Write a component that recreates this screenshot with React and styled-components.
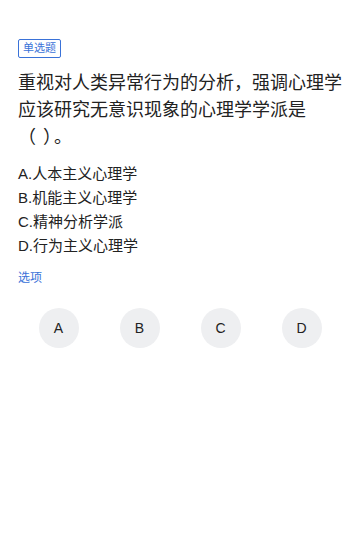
import React from 'react';
import styled, { createGlobalStyle } from 'styled-components';

const GlobalStyle = createGlobalStyle`
  html, body {
    margin: 0;
    padding: 0;
    background: #fff;
  }
  body {
    font-family: "Liberation Sans", "Noto Sans CJK SC", sans-serif;
    color: #222;
  }
`;

const Page = styled.div`
  display: flex;
  flex-direction: column;
  align-items: stretch;
  width: 360px;
  min-height: 550px;
  box-sizing: border-box;
  padding: 39px 18px 0;
  background: #fff;
`;

const Tag = styled.span`
  align-self: flex-start;
  box-sizing: border-box;
  height: 19px;
  padding: 0 4px;
  border: 1px solid #3a72d8;
  border-radius: 2px;
  color: #3a72d8;
  font-size: 11px;
  line-height: 17px;
`;

const Question = styled.div`
  margin-top: 12px;
  font-size: 18px;
  line-height: 27px;
  color: #222;
`;

const Paren = styled.span`
  letter-spacing: ${props => props.gap}px;
`;

const OptionList = styled.ul`
  list-style: none;
  margin: 11px 0 0;
  padding: 0;
`;

const OptionItem = styled.li`
  font-size: 15px;
  line-height: 24px;
  color: #222;
`;

const SectionLabel = styled.div`
  margin-top: 11px;
  font-size: 12px;
  line-height: 18px;
  color: #3a72d8;
`;

const ChoiceRow = styled.div`
  display: grid;
  grid-template-columns: repeat(4, 1fr);
  margin-top: 21px;
`;

const ChoiceButton = styled.button`
  justify-self: center;
  width: 40px;
  height: 40px;
  border: none;
  border-radius: 50%;
  background: ${props => (props.selected ? '#3a72d8' : '#eeeff1')};
  color: ${props => (props.selected ? '#fff' : '#222')};
  font-family: "Liberation Sans", Arial, sans-serif;
  font-size: 14px;
  padding: 0;
`;

const options = [
  { key: 'A', text: '人本主义心理学' },
  { key: 'B', text: '机能主义心理学' },
  { key: 'C', text: '精神分析学派' },
  { key: 'D', text: '行为主义心理学' },
];

export default function App() {
  return (
    <>
      <GlobalStyle />
      <Page>
        <Tag>单选题</Tag>
        <Question>
          重视对人类异常行为的分析，强调心理学应该研究无意识现象的心理学学派是
          <Paren gap={7}>（</Paren>
          <Paren gap={2}>）</Paren>。
        </Question>
        <OptionList>
          {options.map(opt => (
            <OptionItem key={opt.key}>
              {opt.key}.{opt.text}
            </OptionItem>
          ))}
        </OptionList>
        <SectionLabel>选项</SectionLabel>
        <ChoiceRow>
          {options.map(opt => (
            <ChoiceButton key={opt.key}>{opt.key}</ChoiceButton>
          ))}
        </ChoiceRow>
      </Page>
    </>
  );
}
